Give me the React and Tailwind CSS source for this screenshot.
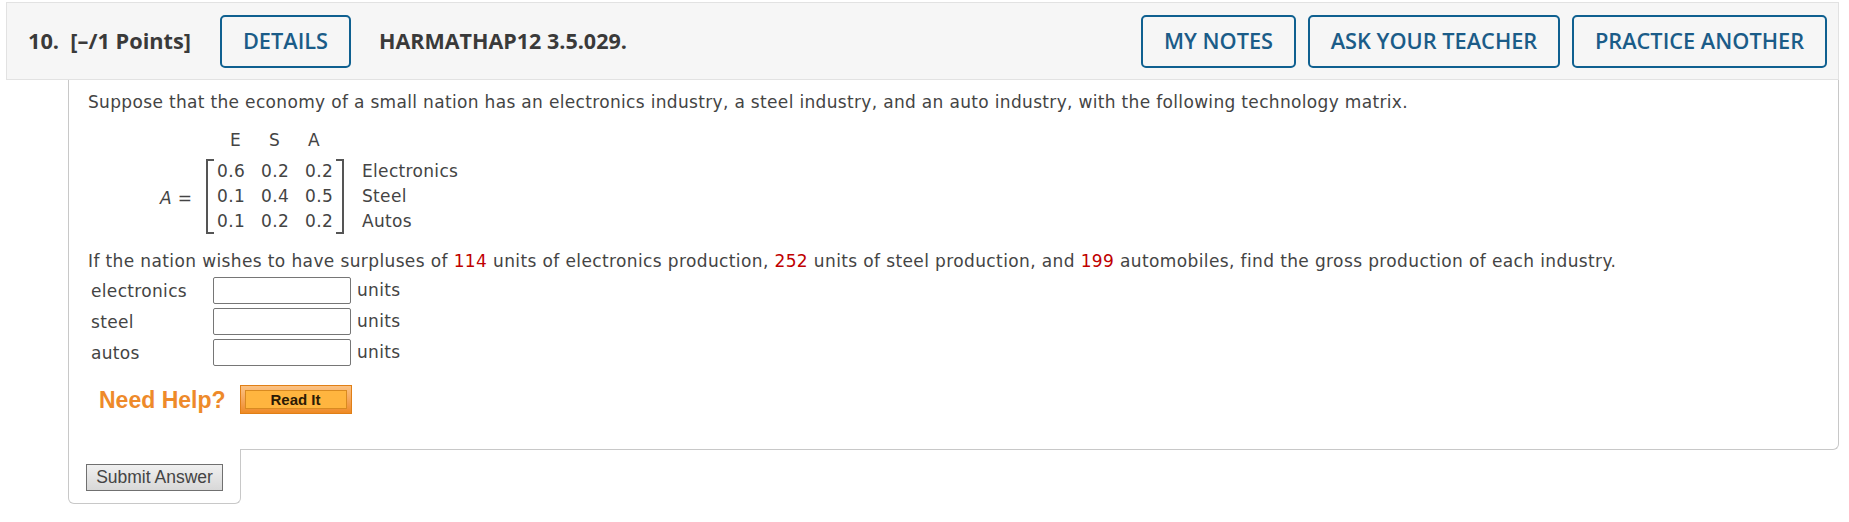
const HeaderButton = ({ width, children }) => (
  <button className={`h-[53px] rounded-[5px] border-2 border-[#0f6090] text-[21.75px] font-semibold text-[#1b5c88] font-['Open_Sans',sans-serif] ${width}`}>
    {children}
  </button>
);

const rows = [
  ["0.6", "0.2", "0.2", "Electronics"],
  ["0.1", "0.4", "0.5", "Steel"],
  ["0.1", "0.2", "0.2", "Autos"],
];

const inputs = ["electronics", "steel", "autos"];

const Matrix = () => (
  <div className="ml-[72px] mt-[10px] flex items-end">
    <span className="mb-[24px] w-[46px] whitespace-pre"><i>A</i> =</span>
    <div>
      <div className="flex h-[35px] items-center pb-[3px] pl-[7px] text-center">
        <span className="w-[45px]">E</span>
        <span className="w-[33px]">S</span>
        <span className="w-[46px]">A</span>
      </div>
      <div className="flex">
        <div className="w-[8px] border-y-2 border-l-2 border-[#555]"></div>
        <div className="grid h-[75px] w-[122px] grid-cols-[44px_44px_35px] content-center pl-[3px] leading-[25px]">
          {rows.map((row) => row.slice(0, 3).map((v, i) => <span key={row[3] + i}>{v}</span>))}
        </div>
        <div className="w-[8px] border-y-2 border-r-2 border-[#555]"></div>
        <div className="ml-[18px] leading-[25px]">
          {rows.map((row) => <div key={row[3]}>{row[3]}</div>)}
        </div>
      </div>
    </div>
  </div>
);

const App = () => (
  <div className="min-h-[522px] bg-white pt-[2px] text-[17px] tracking-[0.33px] text-[#444] font-['DejaVu_Sans','Liberation_Sans',sans-serif]">
    <div className="ml-[6px] mr-[10px] flex h-[78px] items-center justify-between border border-[#e2e2e2] bg-[#f6f6f6] pl-[21px] pr-[11px] tracking-normal font-['Open_Sans',sans-serif]">
      <div className="flex items-center">
        <span className="w-[170px] text-[21.75px] font-bold text-[#3a3a3a] whitespace-pre">10.  [–/1 Points]</span>
        <div className="ml-[22px]"><HeaderButton width="w-[131px]">DETAILS</HeaderButton></div>
        <span className="ml-[28px] text-[21.5px] font-bold text-[#3a3a3a]">HARMATHAP12 3.5.029.</span>
      </div>
      <div className="flex gap-[12px]">
        <HeaderButton width="w-[155px]">MY NOTES</HeaderButton>
        <HeaderButton width="w-[252px]">ASK YOUR TEACHER</HeaderButton>
        <HeaderButton width="w-[255px]">PRACTICE ANOTHER</HeaderButton>
      </div>
    </div>

    <div className="ml-[68px] mr-[10px] h-[370px] rounded-br-[6px] border-x border-b border-[#c8c8c8] pl-[19px] pt-[10px] pr-4 leading-[24px]">
      <p>Suppose that the economy of a small nation has an electronics industry, a steel industry, and an auto industry, with the following technology matrix.</p>
      <Matrix />
      <p className="mt-[15px] tracking-[0.38px]">
        If the nation wishes to have surpluses of <span className="text-[#c00000]">114</span> units of electronics production, <span className="text-[#c00000]">252</span> units of steel production, and <span className="text-[#c00000]">199</span> automobiles, find the gross production of each industry.
      </p>
      <div className="mt-[4px] flex flex-col gap-[4px]">
        {inputs.map((name) => (
          <div key={name} className="flex items-center">
            <span className="ml-[3px] mt-[1px] w-[122px]">{name}</span>
            <div className="h-[27px] w-[138px] rounded-[2px] border border-[#767676] bg-white"></div>
            <span className="ml-[6px] -mt-[2px]">units</span>
          </div>
        ))}
      </div>
      <div className="ml-[11px] mt-[19px] flex items-center tracking-normal">
        <span className="text-[23px] font-bold text-[#ee8a2a] font-['Liberation_Sans',sans-serif]">Need Help?</span>
        <button className="ml-[14px] flex h-[29px] w-[112px] items-center justify-center border border-[#e07f17] bg-gradient-to-b from-[#fbc283] to-[#ee8a22] p-[4px]">
          <span className="flex h-full w-full items-center justify-center border border-[#d98a20] bg-[#ffb53f] text-[15px] font-bold text-[#2a1a05] font-['Liberation_Sans',sans-serif]">Read It</span>
        </button>
      </div>
    </div>

    <div className="relative ml-[68px] -mt-px h-[55px] w-[173px] rounded-b-[6px] border-x border-b border-[#c8c8c8] bg-white pl-[17px] pt-[15px]">
      <button className="h-[27px] w-[137px] border border-[#707070] bg-gradient-to-b from-[#f0f0f0] to-[#d8d8d8] text-[17.5px] leading-none tracking-normal text-[#444] font-['Liberation_Sans',sans-serif]">
        Submit Answer
      </button>
    </div>
  </div>
);

export default App;
